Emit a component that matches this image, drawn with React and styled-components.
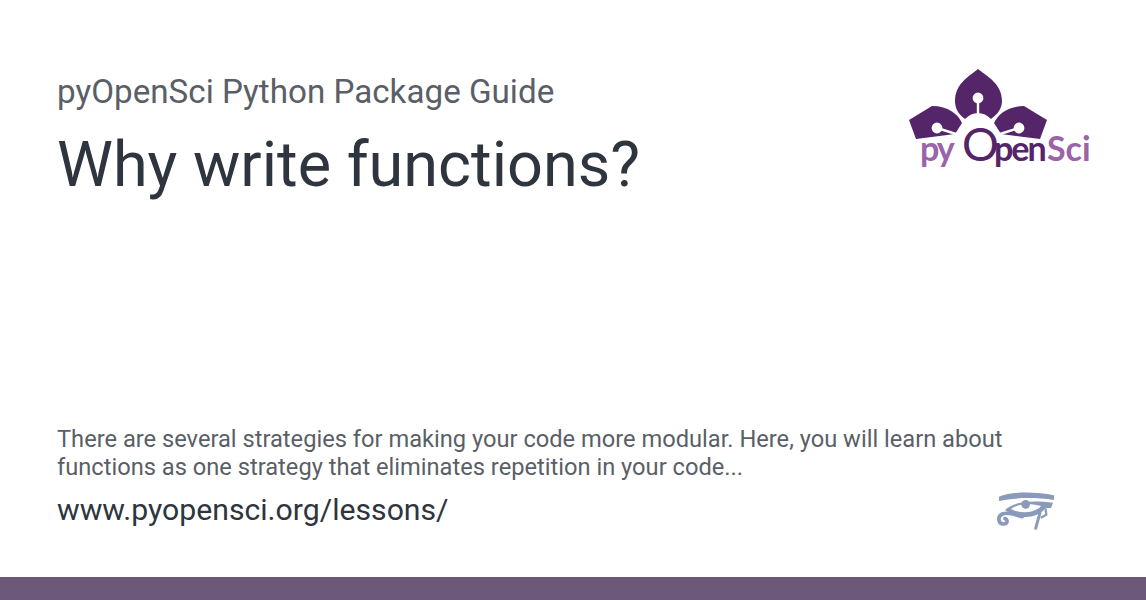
import styled, { createGlobalStyle } from "styled-components";

const GlobalStyle = createGlobalStyle`
  html, body {
    margin: 0;
    padding: 0;
    background: #fff;
  }
`;

const Card = styled.div`
  width: 1146px;
  height: 600px;
  display: flex;
  flex-direction: column;
  background: #fff;
  font-family: Roboto, sans-serif;
  overflow: hidden;
`;
const Main = styled.div`
  flex: 1;
  display: flex;
  flex-direction: column;
  justify-content: space-between;
  padding: 70px 55px 0 57px;
`;
const Header = styled.div`
  display: flex;
  justify-content: space-between;
  align-items: flex-start;
`;
const Site = styled.div`
  font-size: 33.2px;
  line-height: 44px;
  color: #5a5f67;
`;
const Title = styled.h1`
  margin: 13px 0 0;
  font-size: 63px;
  line-height: 76px;
  font-weight: 400;
  color: #2e353e;
`;
const Logo = styled.svg`
  display: block;
  width: 220px;
  height: 130px;
  margin: -15px -19px 0 0;
`;
const LogoText = styled.text`
  font-family: Lato, sans-serif;
  font-size: 34px;
  font-weight: 700;
`;
const Footer = styled.div`
  padding-bottom: 46px;
`;
const Description = styled.p`
  margin: 0;
  font-size: 23.67px;
  line-height: 28px;
  color: #5a5f67;
`;
const UrlRow = styled.div`
  display: flex;
  justify-content: space-between;
  align-items: center;
  margin-top: 8px;
`;
const Url = styled.div`
  font-size: 30.2px;
  line-height: 42px;
  color: #2e353e;
`;
const Eye = styled.svg`
  display: block;
  width: 80px;
  height: 60px;
  margin: -9px 26px -9px 0;
`;
const Bar = styled.div`
  height: 23px;
  background: #6c5878;
`;

const PyOpenSciLogo = () => (
  <Logo viewBox="890 55 220 130" aria-label="pyOpenSci logo">
    <g fill="#542568">
      <path d="M978 69 C988 77 1002 84 1002 101 C1002 108 998 114 991 119 C987 115 983 113 978 113 C973 113 969 115 965 119 C958 114 955 108 955 101 C955 84 968 77 978 69 Z" />
      <path d="M909 120 L932 106 C948 106 958 114 962 123 L955 134 L916 139 Z" />
      <path d="M1047 120 L1024 106 C1008 106 998 114 994 123 L1001 134 L1040 139 Z" />
    </g>
    <g fill="#fff" stroke="#fff">
      <circle cx="978" cy="98" r="4.4" strokeWidth="2" />
      <circle cx="937" cy="128" r="4.4" strokeWidth="2" />
      <circle cx="1019" cy="128" r="4.4" strokeWidth="2" />
      <path d="M978 100V118M937 128L956 134M1019 128L1000 134" strokeWidth="2.4" fill="none" />
    </g>
    <LogoText y="161">
      <tspan x="920" fill="#9b63a8" letterSpacing="-2">py</tspan>
      <tspan x="962" fill="#542568" fontSize="46" fontWeight="400">O</tspan>
      <tspan x="994" fill="#542568" letterSpacing="-2">pen</tspan>
      <tspan x="1047" fill="#9b63a8">Sci</tspan>
    </LogoText>
  </Logo>
);

const EyeOfHorus = () => (
  <Eye viewBox="0 0 240 180" aria-hidden="true">
    <path
      fill="#8a9abb"
      d="M42 50 C80 34 150 34 207 46 L207 60 C150 52 90 52 42 63 Z"
    />
    <path
      fill="#8a9abb"
      d="M60 90 C92 60 150 62 204 68 L198 84 L182 84 C165 106 135 114 110 110 C90 107 74 100 60 90 Z"
    />
    <path fill="#fff" d="M78 87 C100 70 138 70 168 78 C152 98 108 104 78 87 Z" />
    <circle cx="122" cy="73" r="13" fill="#8a9abb" />
    <g fill="none" stroke="#8a9abb" strokeLinecap="round" strokeLinejoin="round">
      <path d="M112 110 C95 106 70 94 52 102 C36 110 40 132 55 132 C68 133 70 118 60 116" strokeWidth="11" />
      <path d="M165 98 L152 145" strokeWidth="9" />
      <path d="M182 88 L184 104 L170 112" strokeWidth="7" />
    </g>
  </Eye>
);

const App = () => {
  return (
    <Card>
      <GlobalStyle />
      <Main>
        <Header>
          <div>
            <Site>pyOpenSci Python Package Guide</Site>
            <Title>Why write functions?</Title>
          </div>
          <PyOpenSciLogo />
        </Header>
        <Footer>
          <Description>
            There are several strategies for making your code more modular. Here, you will learn about
            <br />
            functions as one strategy that eliminates repetition in your code...
          </Description>
          <UrlRow>
            <Url>www.pyopensci.org/lessons/</Url>
            <EyeOfHorus />
          </UrlRow>
        </Footer>
      </Main>
      <Bar />
    </Card>
  );
};

export default App;
